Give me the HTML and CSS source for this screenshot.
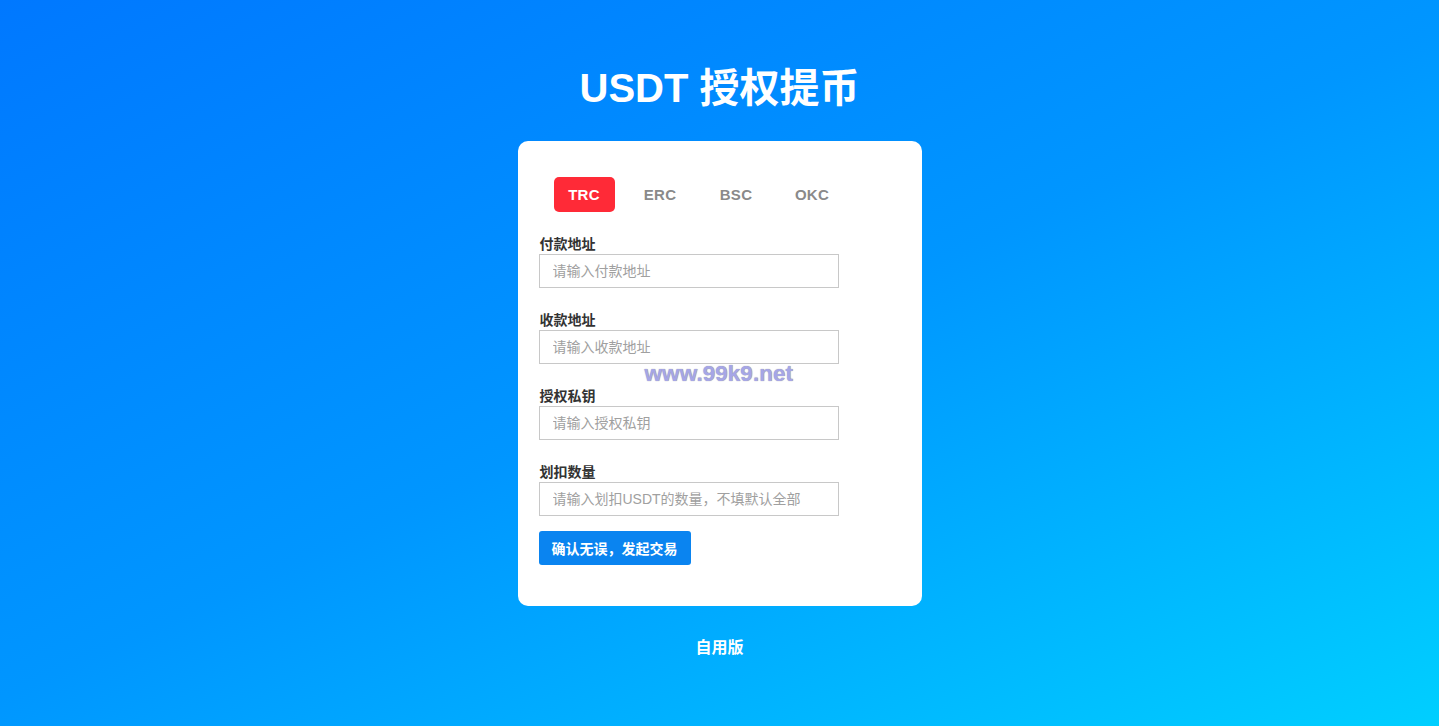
FILE: index.html
```html
<!DOCTYPE html>
<html lang="zh-CN">
<head>
<meta charset="utf-8">
<title>USDT 授权提币</title>
<link rel="stylesheet" href="styles.css">
</head>
<body>
<div class="page">
  <h1 class="title">USDT 授权提币</h1>
  <div class="card">
    <div class="tabs">
      <div class="tab active">TRC</div>
      <div class="tab">ERC</div>
      <div class="tab">BSC</div>
      <div class="tab">OKC</div>
    </div>
    <div class="group">
      <label class="label">付款地址</label>
      <input class="input" type="text" placeholder="请输入付款地址">
    </div>
    <div class="group">
      <label class="label">收款地址</label>
      <input class="input" type="text" placeholder="请输入收款地址">
    </div>
    <div class="group">
      <label class="label">授权私钥</label>
      <input class="input" type="text" placeholder="请输入授权私钥">
    </div>
    <div class="group last">
      <label class="label">划扣数量</label>
      <input class="input" type="text" placeholder="请输入划扣USDT的数量，不填默认全部">
    </div>
    <button class="submit">确认无误，发起交易</button>
    <div class="watermark">www.99k9.net</div>
  </div>
  <div class="footer">自用版</div>
</div>
</body>
</html>
```
FILE: styles.css
```css
html, body {
  margin: 0;
  padding: 0;
  height: 100%;
}
body {
  background: linear-gradient(155deg, #0078ff 0%, #0096ff 50%, #00cfff 100%);
  font-family: "Liberation Sans", "Noto Sans CJK SC", sans-serif;
  overflow: hidden;
}
.page {
  display: flex;
  flex-direction: column;
  align-items: center;
  padding-top: 64px;
}
.title {
  margin: 0;
  font-size: 40px;
  line-height: 48px;
  font-weight: 700;
  color: #fff;
}
.card {
  position: relative;
  margin-top: 29px;
  width: 404px;
  box-sizing: border-box;
  background: #fff;
  border-radius: 10px;
  padding: 36px 21px 41px 21px;
}
.tabs {
  display: flex;
  gap: 15px;
  padding-left: 15px;
  margin-bottom: 22px;
}
.tab {
  width: 61px;
  height: 35px;
  line-height: 35px;
  text-align: center;
  font-size: 15px;
  font-weight: 700;
  color: #8a8a8a;
  border-radius: 5px;
  letter-spacing: 0.3px;
}
.tab.active {
  background: #ff2a37;
  color: #fff;
}
.group {
  display: flex;
  flex-direction: column;
  margin-bottom: 22px;
}
.group.last {
  margin-bottom: 15px;
}
.label {
  font-size: 14px;
  line-height: 20px;
  font-weight: 700;
  color: #333;
  padding-left: 1px;
}
.input {
  width: 300px;
  height: 34px;
  box-sizing: border-box;
  border: 1px solid #c8c8c8;
  border-radius: 0;
  padding: 0 13px;
  font-size: 14px;
  font-family: "Liberation Sans", "Noto Sans CJK SC", sans-serif;
  color: #333;
  outline: none;
  margin: 0;
}
.input::placeholder {
  color: #a0a0a0;
}
.submit {
  display: block;
  width: 152px;
  height: 34px;
  border: none;
  border-radius: 3px;
  background: #0a84f0;
  color: #fff;
  font-size: 14px;
  font-weight: 700;
  font-family: "Liberation Sans", "Noto Sans CJK SC", sans-serif;
  padding: 0;
  margin: 0;
}
.watermark {
  position: absolute;
  left: 127px;
  top: 220px;
  font-family: "Liberation Sans", sans-serif;
  font-size: 22.6px;
  font-weight: 700;
  color: #a6a6e6;
  text-shadow: 0 0 1px #8a8a8a;
}
.footer {
  margin-top: 30px;
  font-size: 16px;
  line-height: 24px;
  font-weight: 700;
  color: #fff;
}
```
